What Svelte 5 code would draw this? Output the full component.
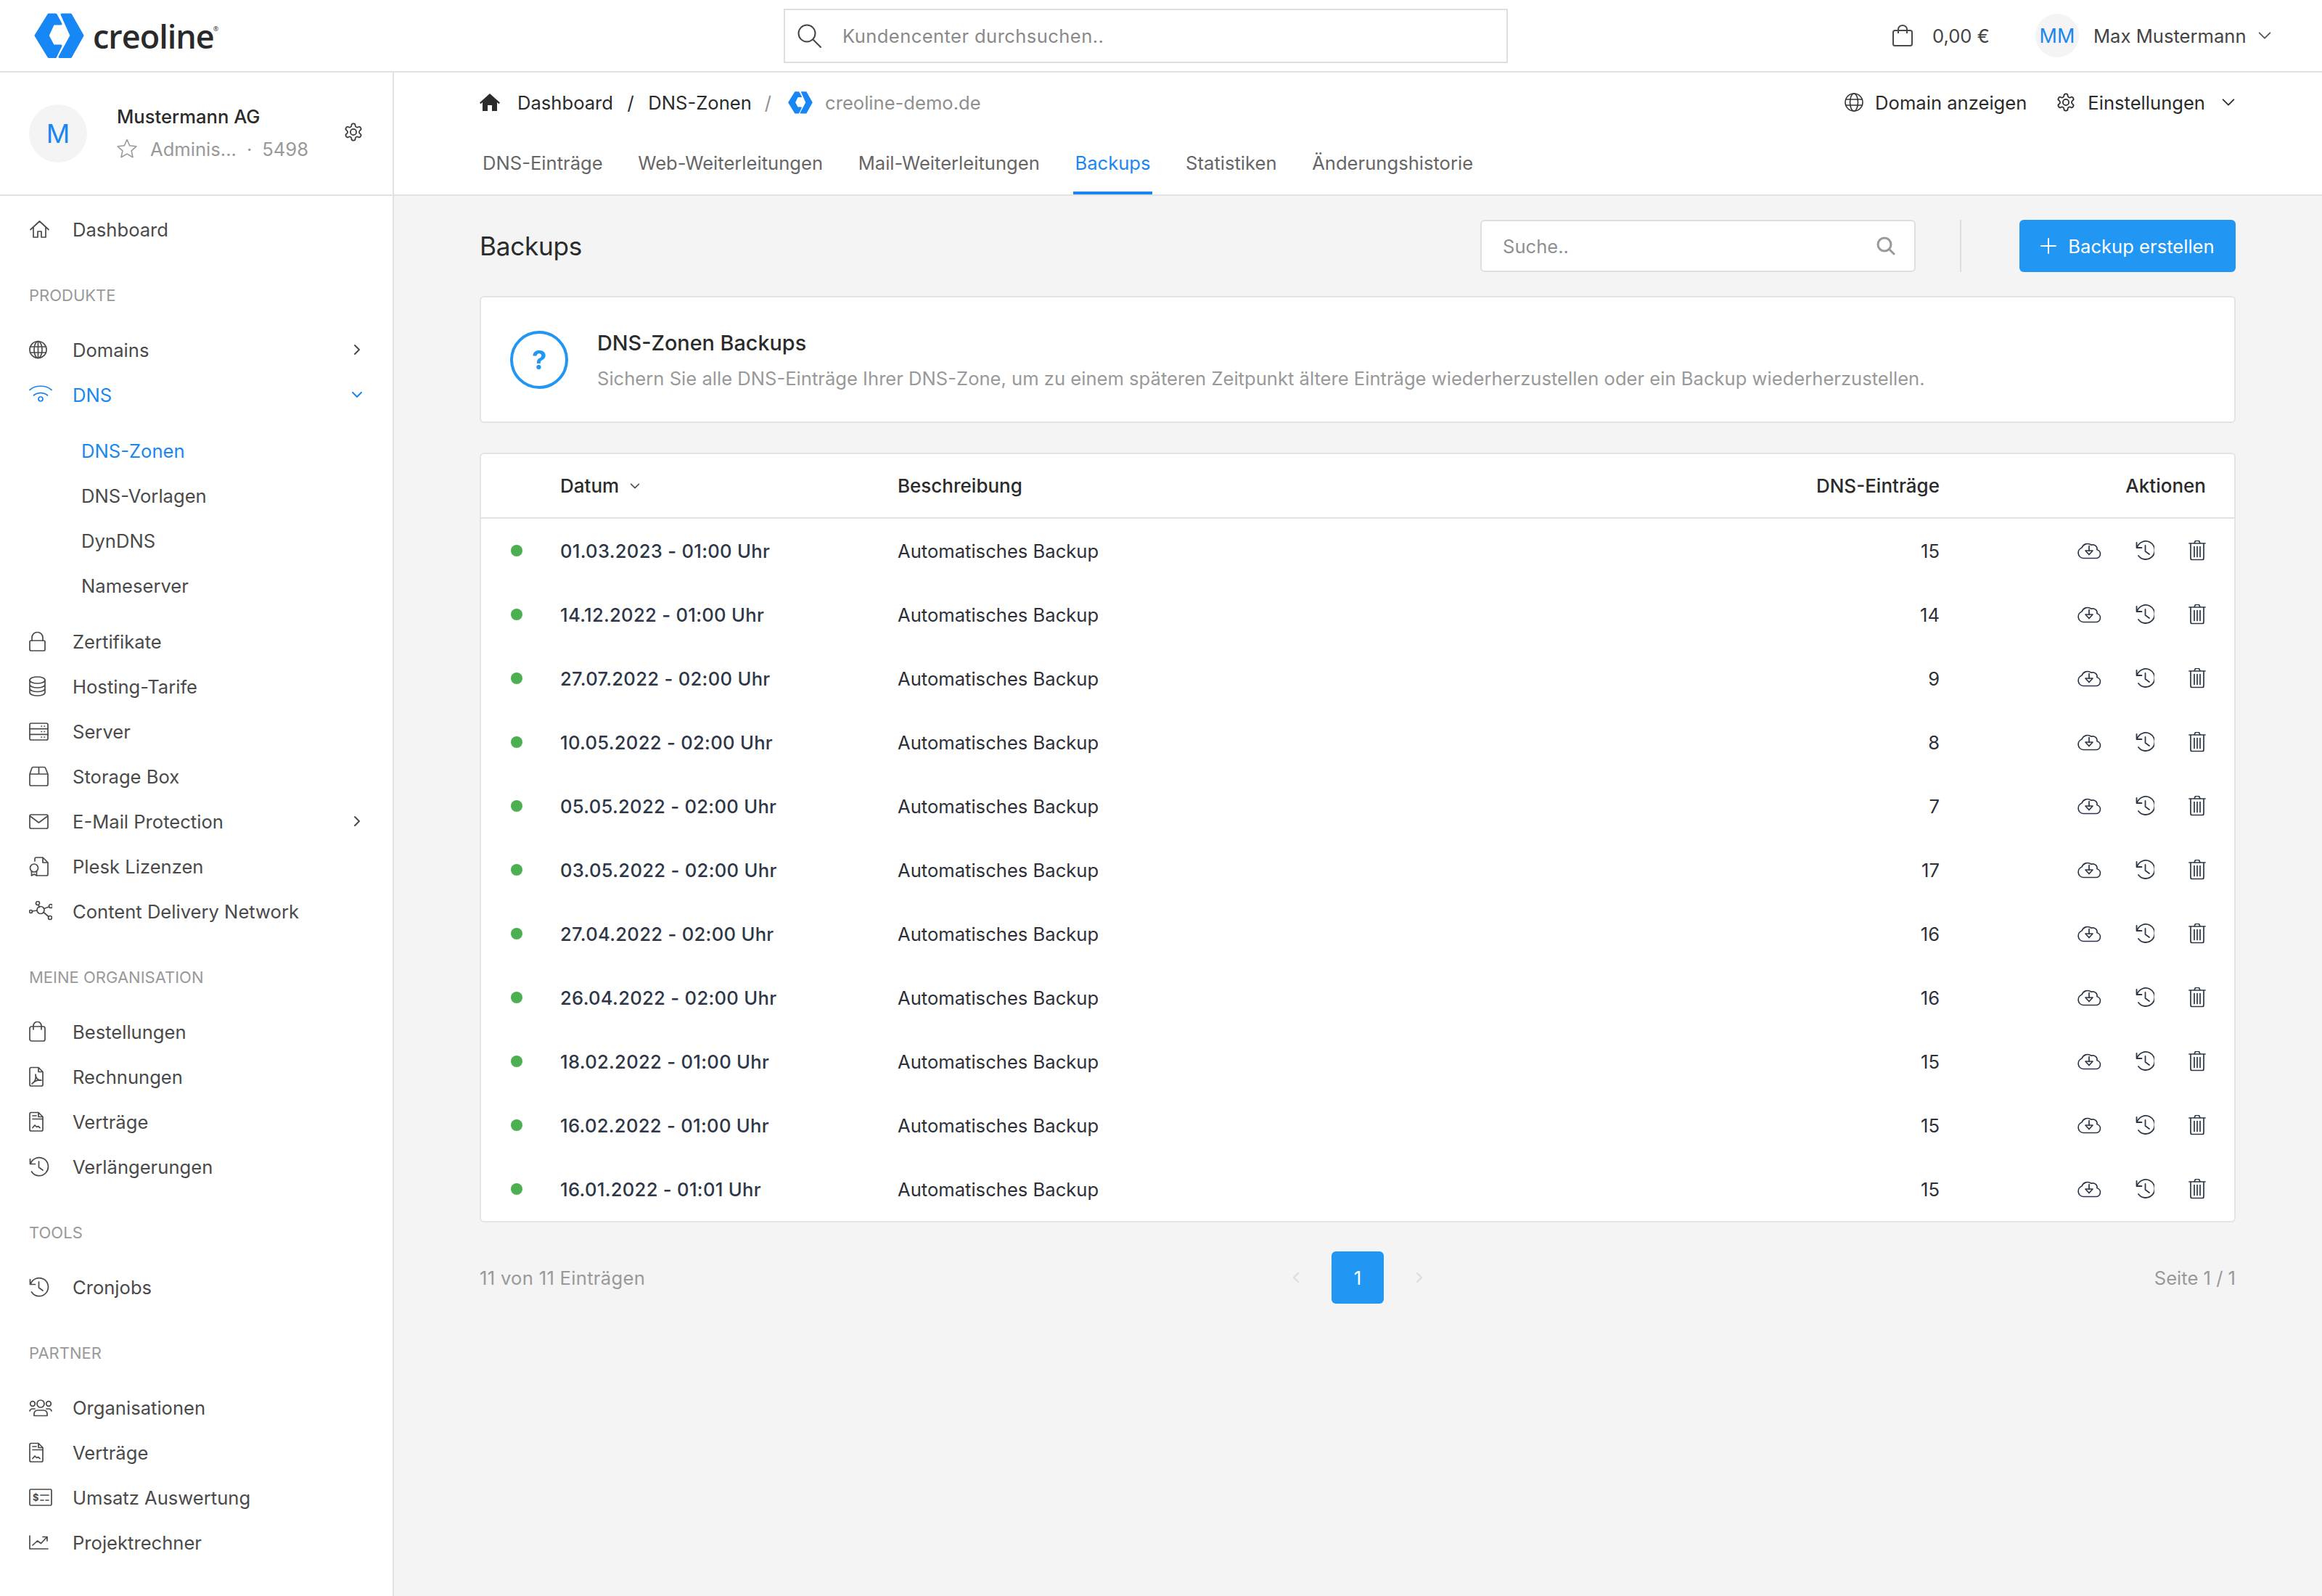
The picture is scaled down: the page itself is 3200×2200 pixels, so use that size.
<script>
  const gearPath = "M12.22 2h-.44a2 2 0 0 0-2 2v.18a2 2 0 0 1-1 1.73l-.43.25a2 2 0 0 1-2 0l-.15-.08a2 2 0 0 0-2.73.73l-.22.38a2 2 0 0 0 .73 2.73l.15.1a2 2 0 0 1 1 1.72v.51a2 2 0 0 1-1 1.74l-.15.09a2 2 0 0 0-.73 2.73l.22.38a2 2 0 0 0 2.73.73l.15-.08a2 2 0 0 1 2 0l.43.25a2 2 0 0 1 1 1.73V20a2 2 0 0 0 2 2h.44a2 2 0 0 0 2-2v-.18a2 2 0 0 1 1-1.73l.43-.25a2 2 0 0 1 2 0l.15.08a2 2 0 0 0 2.73-.73l.22-.39a2 2 0 0 0-.73-2.73l-.15-.08a2 2 0 0 1-1-1.74v-.5a2 2 0 0 1 1-1.74l.15-.09a2 2 0 0 0 .73-2.73l-.22-.38a2 2 0 0 0-2.73-.73l-.15.08a2 2 0 0 1-2 0l-.43-.25a2 2 0 0 1-1-1.73V4a2 2 0 0 0-2-2z";

  const sections = [
    { items: [{ label: "Dashboard", icon: "home" }] },
    { title: "Produkte", items: [
      { label: "Domains", icon: "globe", chevron: "right" },
      { label: "DNS", icon: "wifi", chevron: "down", active: true, children: [
        { label: "DNS-Zonen", active: true }, { label: "DNS-Vorlagen" }, { label: "DynDNS" }, { label: "Nameserver" } ] },
      { label: "Zertifikate", icon: "lock" },
      { label: "Hosting-Tarife", icon: "db" },
      { label: "Server", icon: "server" },
      { label: "Storage Box", icon: "box" },
      { label: "E-Mail Protection", icon: "mail", chevron: "right" },
      { label: "Plesk Lizenzen", icon: "cert" },
      { label: "Content Delivery Network", icon: "cdn" } ] },
    { title: "Meine Organisation", items: [
      { label: "Bestellungen", icon: "bag" },
      { label: "Rechnungen", icon: "pdf" },
      { label: "Verträge", icon: "contract" },
      { label: "Verlängerungen", icon: "history" } ] },
    { title: "Tools", items: [{ label: "Cronjobs", icon: "history" }] },
    { title: "Partner", items: [
      { label: "Organisationen", icon: "people" },
      { label: "Verträge", icon: "contract" },
      { label: "Umsatz Auswertung", icon: "check" },
      { label: "Projektrechner", icon: "chart" } ] }
  ];

  const tabs = ["DNS-Einträge", "Web-Weiterleitungen", "Mail-Weiterleitungen", "Backups", "Statistiken", "Änderungshistorie"];

  const rows = [
    ["01.03.2023 - 01:00 Uhr", 15], ["14.12.2022 - 01:00 Uhr", 14], ["27.07.2022 - 02:00 Uhr", 9],
    ["10.05.2022 - 02:00 Uhr", 8], ["05.05.2022 - 02:00 Uhr", 7], ["03.05.2022 - 02:00 Uhr", 17],
    ["27.04.2022 - 02:00 Uhr", 16], ["26.04.2022 - 02:00 Uhr", 16], ["18.02.2022 - 01:00 Uhr", 15],
    ["16.02.2022 - 01:00 Uhr", 15], ["16.01.2022 - 01:01 Uhr", 15]
  ];
</script>

{#snippet navIcon(name)}
  <svg class="nav-icon" viewBox="0 0 32 28" width="32" height="28" fill="none" stroke="currentColor" stroke-width="1.7" stroke-linecap="round" stroke-linejoin="round">
    {#if name === "home"}
      <path d="M2 14.500 14.500 3 27 14.500M6 11.500V25h6v-8h5v8h6V11.500" />
    {:else if name === "globe"}
      <circle cx="12.500" cy="14" r="11.500" /><ellipse cx="12.500" cy="14" rx="5.500" ry="11.500" /><path d="M1.500 10h22M1.500 18h22M12.500 2.500v23" />
    {:else if name === "wifi"}
      <path d="M1 7.500C9 .5 23 .5 31 7.500M6.500 15c5-4.500 14-4.500 19 0" /><circle cx="16" cy="20" r="3" />
    {:else if name === "lock"}
      <rect x="1" y="13" width="21" height="14" rx="2" /><path d="M4 13V9a7.500 7.500 0 0 1 15 0v4" />
    {:else if name === "db"}
      <ellipse cx="11.500" cy="5.500" rx="10.500" ry="4.500" /><path d="M1 5.500v17c0 2.500 4.700 4.500 10.500 4.500S22 25 22 22.500v-17M1 11.500c0 2.500 4.700 4.500 10.500 4.500S22 14 22 11.500M1 17c0 2.500 4.700 4.500 10.500 4.500S22 19.500 22 17" />
    {:else if name === "server"}
      <rect x="1" y="3" width="25" height="23" rx="2" /><path d="M1 10.700h25M1 18.300h25M17 7h.5M21 7h.5M17 14.500h.5M21 14.500h.5M17 22h.5M21 22h.5" />
    {:else if name === "box"}
      <path d="M1 11 4 2.500Q4.300 1.500 5.500 1.500h15.500Q22.200 1.500 22.500 2.500L26 11v14a2 2 0 0 1-2 2H3a2 2 0 0 1-2-2zM1 11h25M13.500 1.500V11" />
    {:else if name === "mail"}
      <rect x="1" y="5" width="25" height="19" rx="2" /><path d="M1.500 7 13.500 16 25.500 7" />
    {:else if name === "cert"}
      <path d="M8 7V4a2 2 0 0 1 2-2h9l7 7v16a2 2 0 0 1-2 2H11M19 2v7h7" /><circle cx="7" cy="16.500" r="5.500" /><path d="M3.500 21v6l3.500-2 3.500 2v-6" />
    {:else if name === "cdn"}
      <circle cx="16" cy="12.500" r="5" /><circle cx="12" cy="3" r="2.500" /><circle cx="30" cy="7" r="2.500" /><circle cx="2.500" cy="14.500" r="2" /><circle cx="29" cy="23" r="2.500" /><path d="M13 5.500l1.500 3M27.500 8l-7 2.500M4.500 14l6.500-1M20 15.500l7 6" />
    {:else if name === "bag"}
      <rect x="1" y="7" width="21" height="20" rx="2.500" /><path d="M6 11V6a5 5 0 0 1 11 0v5" />
    {:else if name === "pdf"}
      <path d="M1 3.500A2 2 0 0 1 3 1.500h10l6 6V25a2 2 0 0 1-2 2H3a2 2 0 0 1-2-2zM13 1.500v6h6" /><path d="M4 24c4-2.500 6-7.500 5-13 0 5 3.500 8.500 8 8-4.500-.5-9.500 1-13 5z" />
    {:else if name === "contract"}
      <path d="M1 3.500A2 2 0 0 1 3 1.500h10l6 6V25a2 2 0 0 1-2 2H3a2 2 0 0 1-2-2zM13 1.500v6h6M5 6h5M5 10.500h14M5 22.500l3-3.500 2.500 2.500 2-1 2.500 2" />
    {:else if name === "history"}
      <path d="M1.500 3.500v7h7M2 10.500A12.500 12.500 0 1 1 3.500 21M13.500 7v8l5.500 4" />
    {:else if name === "people"}
      <circle cx="16" cy="9" r="5" /><circle cx="5" cy="9" r="3.300" /><circle cx="27" cy="9" r="3.300" /><path d="M7 25.500v-3a4.500 4.500 0 0 1 4.500-4.500h9a4.500 4.500 0 0 1 4.500 4.500v3zM1 19c.5-2 2-3 4-3h3M31 19c-.5-2-2-3-4-3h-3" />
    {:else if name === "check"}
      <rect x="1" y="3" width="30" height="22" rx="1.500" /><path d="M16 11h11M16 18h4M23 18h4" /><text x="5" y="19" font-size="13" font-weight="700" fill="currentColor" stroke="none" font-family="Inter, sans-serif">$</text>
    {:else if name === "chart"}
      <path d="M1 5v18h25M5 18l6.500-6 5 3.500 7.500-8M19 6.500h6V12" />
    {/if}
  </svg>
{/snippet}

{#snippet chevron(dir, size = 18)}
  <svg class="chev" viewBox="0 0 18 18" width={size} height={size} fill="none" stroke="currentColor" stroke-width="2" stroke-linecap="round" stroke-linejoin="round">
    {#if dir === "right"}<path d="M6 3l6 6-6 6" />{:else}<path d="M3 6l6 6 6-6" />{/if}
  </svg>
{/snippet}

{#snippet gear(size)}
  <svg viewBox="0 0 24 24" width={size} height={size} fill="none" stroke="currentColor" stroke-width="1.500" stroke-linejoin="round">
    <path d={gearPath} /><circle cx="12" cy="12" r="3.500" />
  </svg>
{/snippet}

{#snippet logoMark(w, h)}
  <svg viewBox="0 0 69 63" width={w} height={h} fill="#1787f5" stroke="#1787f5" stroke-width="3" stroke-linejoin="round">
    <path d="M20 2h10l7 13H26.500L19 31l7.500 14H37l-7.500 15.500H20L2 31z" />
    <path d="M38 2h12.500L67 31 50.500 60.500H35L51 31z" />
  </svg>
{/snippet}

<div class="page">
  <header class="topbar">
    <div class="brand">
      {@render logoMark(69, 63)}
      <span class="wordmark">creoline<sup>®</sup></span>
    </div>
    <div class="global-search">
      <svg viewBox="0 0 36 36" width="36" height="36" fill="none" stroke="#444" stroke-width="2" stroke-linecap="round"><circle cx="15" cy="15" r="11.500" /><path d="M24 24l10 10" /></svg>
      <span>Kundencenter durchsuchen..</span>
    </div>
    <div class="account">
      <div class="cart">
        <svg viewBox="0 0 28 30" width="28" height="30" fill="none" stroke="#4a4a4a" stroke-width="2" stroke-linejoin="round"><rect x="1" y="8" width="26" height="21" rx="2.500" /><path d="M8 12V6.500a6 5.500 0 0 1 12 0V12" /></svg>
        <span>0,00 €</span>
      </div>
      <div class="user">
        <span class="avatar-sm">MM</span>
        <span>Max Mustermann</span>
        {@render chevron("down", 22)}
      </div>
    </div>
  </header>

  <div class="body">
    <aside class="sidebar">
      <div class="profile">
        <span class="avatar">M</span>
        <div class="profile-text">
          <div class="org">Mustermann AG</div>
          <div class="role">
            <svg viewBox="0 0 28 28" width="28" height="28" fill="none" stroke="#999" stroke-width="1.600" stroke-linejoin="round"><path d="M14 1.500l3.800 8.300 9 1-6.700 6 1.900 8.900-8-4.600-8 4.600 1.900-8.900-6.700-6 9-1z" /></svg>
            <span class="role-name">Adminis...</span>
            <span class="role-dot">·</span>
            <span>5498</span>
          </div>
        </div>
        <span class="profile-gear">{@render gear(28)}</span>
      </div>

      <nav class="nav">
        {#each sections as section}
          {#if section.title}<div class="nav-title">{section.title}</div>{/if}
          {#each section.items as item}
            <div class="nav-item" class:active={item.active}>
              {@render navIcon(item.icon)}
              <span class="nav-label">{item.label}</span>
              {#if item.chevron}{@render chevron(item.chevron, 18)}{/if}
            </div>
            {#if item.children}
              <div class="subnav">
                {#each item.children as child}
                  <div class="sub-item" class:active={child.active}>{child.label}</div>
                {/each}
              </div>
            {/if}
          {/each}
        {/each}
      </nav>
    </aside>

    <main class="main">
      <section class="subheader">
        <div class="crumb-row">
          <div class="crumbs">
            <svg class="crumb-home" viewBox="0 0 28 26" width="28" height="26" fill="#2b2b2b"><path d="M14 1 0 13.500l1.500 1.700L4 13v12h7v-8h6v8h7V13l2.500 2.200 1.500-1.700z" /></svg>
            <span>Dashboard</span>
            <span class="sep">/</span>
            <span>DNS-Zonen</span>
            <span class="sep muted">/</span>
            <span class="crumb-logo">{@render logoMark(34, 31)}</span>
            <span class="muted">creoline-demo.de</span>
          </div>
          <div class="crumb-actions">
            <span class="crumb-action">
              <svg viewBox="0 0 26 26" width="26" height="26" fill="none" stroke="#333" stroke-width="1.600"><circle cx="13" cy="13" r="12" /><ellipse cx="13" cy="13" rx="5.500" ry="12" /><path d="M1.500 9h23M1.500 17h23" /></svg>
              Domain anzeigen
            </span>
            <span class="crumb-action">
              {@render gear(28)}
              Einstellungen
              <span class="crumb-chev">{@render chevron("down", 22)}</span>
            </span>
          </div>
        </div>
        <div class="tabs">
          {#each tabs as tab}
            <span class="tab" class:active={tab === "Backups"}>{tab}</span>
          {/each}
        </div>
      </section>

      <div class="content">
        <div class="title-row">
          <h1>Backups</h1>
          <div class="search">
            <span>Suche..</span>
            <svg viewBox="0 0 26 26" width="26" height="26" fill="none" stroke="#999" stroke-width="3" stroke-linecap="round"><circle cx="11" cy="11" r="9" /><path d="M18 18l6 6" /></svg>
          </div>
          <span class="divider"></span>
          <button class="primary">
            <svg viewBox="0 0 22 22" width="22" height="22" fill="none" stroke="#fff" stroke-width="2" stroke-linecap="round"><path d="M11 1v20M1 11h20" /></svg>
            Backup erstellen
          </button>
        </div>

        <div class="card info">
          <span class="help">?</span>
          <div class="info-body">
            <div class="info-title">DNS-Zonen Backups</div>
            <div class="info-text">Sichern Sie alle DNS-Einträge Ihrer DNS-Zone, um zu einem späteren Zeitpunkt ältere Einträge wiederherzustellen oder ein Backup wiederherzustellen.</div>
          </div>
        </div>

        <div class="card table-card">
          <table>
            <thead>
              <tr>
                <th class="c-dot"></th>
                <th class="c-date"><span class="sort">Datum {@render chevron("down", 16)}</span></th>
                <th class="c-desc">Beschreibung</th>
                <th class="c-num">DNS-Einträge</th>
                <th class="c-act">Aktionen</th>
              </tr>
            </thead>
            <tbody>
              {#each rows as row}
                <tr>
                  <td class="c-dot"><span class="dot"></span></td>
                  <td class="c-date date">{row[0]}</td>
                  <td class="c-desc">Automatisches Backup</td>
                  <td class="c-num">{row[1]}</td>
                  <td class="c-act">
                    <div class="actions">
                      <svg viewBox="0 1.500 34 28" width="34" height="28" fill="none" stroke="#2d3748" stroke-width="1.700" stroke-linejoin="round" stroke-linecap="round"><path d="M9 26h17.500a6 6 0 0 0 1.500-11.800 6 6 0 0 0-8-6.500A8.500 8.500 0 0 0 7 11.500 7.500 7.500 0 0 0 9 26z" /><path d="M17 9v7M12 15.500h10L17 21z" /></svg>
                      <svg viewBox="0 1 26 28" width="26" height="28" fill="none" stroke="#2d3748" stroke-width="1.800" stroke-linecap="round" stroke-linejoin="round"><path d="M1.500 4v7h7M2 11A12.500 12.500 0 1 1 4 22M13.500 8v8l5.500 4" /></svg>
                      <svg viewBox="0 1 24 28" width="24" height="28" fill="none" stroke="#2d3748" stroke-width="1.700" stroke-linecap="round" stroke-linejoin="round"><path d="M1 5h22M8 5l1-2.500Q9.500 1.500 10.500 1.500h3q1 0 1.500 1L16 5M3 5v20.500a2 2 0 0 0 2 2h14a2 2 0 0 0 2-2V5M8 9.500v14M12 9.500v14M16 9.500v14" /></svg>
                    </div>
                  </td>
                </tr>
              {/each}
            </tbody>
          </table>
        </div>

        <div class="pager">
          <span class="pager-side left">11 von 11 Einträgen</span>
          <div class="pages">
            <span class="page-arrow">{@render chevron("right", 18)}</span>
            <span class="page-btn">1</span>
            <span class="page-arrow next">{@render chevron("right", 18)}</span>
          </div>
          <span class="pager-side right">Seite 1 / 1</span>
        </div>
      </div>
    </main>
  </div>
</div>

<style>
  :global(body) {
    margin: 0;
    background: #f4f4f4;
    font-family: Inter, "Liberation Sans", sans-serif;
    font-size: 25.6px;
    color: #2b2b2b;
  }
  .page { width: 3200px; height: 2200px; display: flex; flex-direction: column; overflow: hidden; }

  .topbar {
    height: 98px; flex: none; background: #fff; border-bottom: 2px solid #e2e2e2;
    display: grid; grid-template-columns: 1080px 998px 1fr; align-items: center;
  }
  .brand { display: flex; align-items: center; padding-left: 47px; gap: 12px; }
  .wordmark {
    font-family: "Open Sans", sans-serif; font-size: 45px; font-weight: 600; color: #2a2a2a;
    letter-spacing: -1px; line-height: 1;
  }
  .wordmark sup { font-size: 9px; vertical-align: 24px; font-weight: 400; letter-spacing: 0; margin-left: -1px; }
  .global-search {
    height: 75px; box-sizing: border-box; border: 2px solid #dedede; background: #fff;
    display: flex; align-items: center; padding-left: 15px; gap: 28px; color: #8a8a8a; letter-spacing: 0.4px;
  }
  .account { display: flex; align-items: center; padding-left: 530px; }
  .cart { display: flex; align-items: center; gap: 27px; color: #444; width: 197px; }
  .user { display: flex; align-items: center; gap: 20px; color: #444; }
  .avatar-sm {
    width: 60px; height: 60px; border-radius: 50%; background: #f4f4f4; color: #1a87f0; font-size: 27px;
    display: flex; align-items: center; justify-content: center; flex: none;
  }
  .user :global(.chev) { color: #555; margin-left: -6px; stroke-width: 1.5; }

  .body { flex: 1; display: flex; min-height: 0; }

  .sidebar { width: 541px; flex: none; background: #fff; border-right: 2px solid #e2e2e2; }
  .profile {
    height: 170px; box-sizing: border-box; border-bottom: 2px solid #e2e2e2;
    display: flex; align-items: center; padding-left: 40px; position: relative;
  }
  .avatar {
    width: 80px; height: 80px; border-radius: 50%; background: #f4f4f4; color: #1a87f0;
    display: flex; align-items: center; justify-content: center; font-size: 36px; flex: none;
    margin-right: 41px;
  }
  .org { line-height: 40px; color: #2b2b2b; font-weight: 500; }
  .role { display: flex; align-items: center; color: #999; height: 44px; margin-top: 2px; }
  .role-name { margin-left: 18px; }
  .role-dot { margin: 0 14px; }
  .profile-gear { position: absolute; left: 473px; top: 68px; color: #3a3a3a; display: flex; }

  .nav { padding-top: 15px; }
  .nav-item, .sub-item { height: 62px; display: flex; align-items: center; color: #4a4a4a; }
  .nav-item { padding: 0 40px; position: relative; }
  .nav-icon { flex: none; margin-right: 28px; }
  .nav-label { flex: 1; }
  .nav-item.active, .sub-item.active { color: #1a87f0; }
  .nav-title {
    text-transform: uppercase; color: #999; font-size: 22px; line-height: 30px;
    padding: 45px 40px 29px;
  }
  .subnav { padding: 15px 0 15px 112px; }

  .main { flex: 1; min-width: 0; display: flex; flex-direction: column; }
  .subheader {
    height: 170px; box-sizing: border-box; background: #fff; border-bottom: 2px solid #e2e2e2;
    padding: 0 118px; display: flex; flex-direction: column;
  }
  .crumb-row { display: flex; justify-content: space-between; align-items: center; height: 82px; }
  .crumbs { display: flex; align-items: center; color: #2b2b2b; }
  .crumb-home { margin-right: 24px; }
  .sep { margin: 0 19.5px; }
  .sep.muted { margin: 0 23px 0 18px; }
  .muted { color: #8f8f8f; }
  .crumb-logo { display: flex; margin-right: 17px; }
  .crumb-actions { display: flex; align-items: center; gap: 40px; }
  .crumb-action { display: flex; align-items: center; gap: 16px; color: #2b2b2b; }
  .crumb-chev { display: flex; margin-left: 5px; }
  .crumb-chev :global(.chev) { stroke-width: 1.5; }
  .tabs { display: flex; gap: 44.6px; margin-top: 7px; height: 79px; padding-left: 2px; }
  .tab {
    color: #666; display: flex; align-items: center; padding: 4px 2px 8px; height: 79px; box-sizing: border-box;
    border-bottom: 4px solid transparent;
  }
  .tab.active { color: #1a87f0; border-bottom-color: #1a87f0; }

  .content { padding: 34px 119px 0 118px; display: flex; flex-direction: column; }
  .title-row { display: flex; align-items: center; height: 70px; }
  h1 { font-size: 35.2px; font-weight: 400; margin: 0; flex: 1; color: #2b2b2b; letter-spacing: -0.3px; }
  .search {
    width: 600px; height: 72px; box-sizing: border-box; background: #fff; border: 2px solid #dedede;
    border-radius: 6px; display: flex; align-items: center; justify-content: space-between;
    padding: 0 26px 0 29px; color: #8f8f8f;
  }
  .divider { width: 2px; height: 72px; background: #dedede; margin: 0 80px 0 61px; }
  .primary {
    width: 298px; height: 72px; border: 0; border-radius: 6px; background: #2196f3; color: #fff;
    font: inherit; display: flex; align-items: center; justify-content: center; gap: 16px; padding: 0;
  }

  .card { background: #fff; border: 2px solid #e4e4e4; border-radius: 6px; box-sizing: border-box; }
  .info {
    margin-top: 34px; height: 175px; display: flex; align-items: center; padding-left: 40px; gap: 40px;
  }
  .help {
    width: 80px; height: 80px; box-sizing: border-box; border: 4px solid #2196f3; border-radius: 50%;
    color: #2196f3; font-size: 36px; font-weight: 700; display: flex; align-items: center; justify-content: center; flex: none;
  }
  .info-body { padding-top: 3px; }
  .info-title { font-size: 28.8px; font-weight: 500; line-height: 44px; color: #2b2b2b; }
  .info-text { color: #999; line-height: 44px; margin-top: 5px; }

  .table-card { margin-top: 41px; }
  table { width: 100%; border-collapse: collapse; table-layout: fixed; }
  th { height: 87px; padding: 0; text-align: left; font-size: 26px; font-weight: 500; border-bottom: 2px solid #e2e2e2; color: #2b2b2b; }
  td { height: 88px; padding: 0; color: #2d3038; }
  .c-dot { width: 109px; }
  .c-date { width: 465px; }
  .c-desc { width: auto; }
  .c-num { width: 300px; text-align: right; }
  .c-act { width: 406px; text-align: right; padding-right: 39px; box-sizing: border-box; }
  .sort { display: inline-flex; align-items: center; gap: 14px; }
  .sort :global(.chev) { color: #555; }
  .dot { display: block; width: 16px; height: 16px; border-radius: 50%; background: #4caf50; margin-left: 41px; }
  .date { font-weight: 500; color: #2d3748; letter-spacing: 0.3px; }
  .actions { display: flex; justify-content: flex-end; align-items: center; gap: 47px; }

  .pager { display: grid; grid-template-columns: 1fr auto 1fr; align-items: center; height: 72px; margin-top: 40px; color: #999; }
  .pager-side.left { letter-spacing: 0.3px; }
  .pager-side.right { text-align: right; }
  .pages { display: flex; align-items: center; gap: 40px; }
  .page-arrow { display: flex; color: #dcdcdc; transform: scaleX(-1); }
  .page-arrow.next { transform: none; }
  .page-btn {
    width: 72px; height: 72px; border-radius: 6px; background: #2196f3; color: #fff;
    display: flex; align-items: center; justify-content: center;
  }
</style>
